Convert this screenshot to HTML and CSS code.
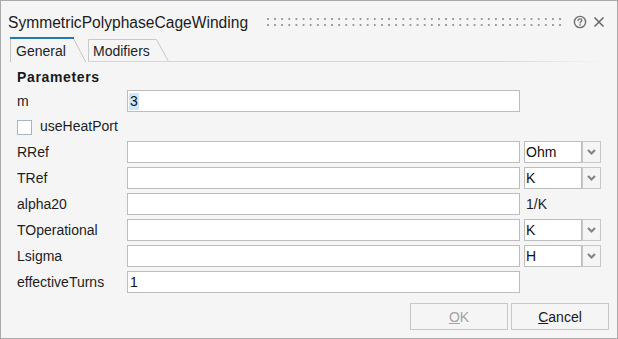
FILE: index.html
```html
<!DOCTYPE html>
<html>
<head>
<meta charset="utf-8">
<link rel="stylesheet" href="styles.css">
</head>
<body>
<div class="window">
  <div class="titlebar">
    <span class="title">SymmetricPolyphaseCageWinding</span>
    <span class="grip"></span>
    <svg class="help" width="14" height="14" viewBox="0 0 14 14">
      <circle cx="7" cy="7" r="5.6" fill="none" stroke="#6e6e6e" stroke-width="1.4"/>
      <path d="M5.1 5.6 C5.1 4.4 6 3.9 7 3.9 C8.1 3.9 8.9 4.5 8.9 5.4 C8.9 6.5 7.1 6.7 7.1 8" fill="none" stroke="#6e6e6e" stroke-width="1.3" stroke-linecap="round"/>
      <circle cx="7.1" cy="9.9" r="0.8" fill="#6e6e6e"/>
    </svg>
    <svg class="close" width="12" height="12" viewBox="0 0 12 12">
      <path d="M1.5 1.5 L10.5 10.5 M10.5 1.5 L1.5 10.5" stroke="#666" stroke-width="1.5" fill="none"/>
    </svg>
  </div>

  <div class="tabs">
    <div class="tab tab-active">
      <svg class="tab-shape" width="78" height="25" viewBox="0 0 78 25">
        <path d="M0.5 25 V1.5 H63.5 L75.8 25" fill="#f5f5f5" stroke="#c4c4c4" stroke-width="1"/>
        <path d="M0 1 H64" stroke="#2479b2" stroke-width="2"/>
      </svg>
      <span class="tab-label">General</span>
    </div>
    <div class="tab tab-inactive">
      <svg class="tab-shape" width="82" height="23" viewBox="0 0 82 23">
        <path d="M0.5 22.5 V0.5 H68.5 L80.5 22.5" fill="#f5f5f5" stroke="#c8c8c8" stroke-width="1"/>
        <path d="M0 22.5 H82" stroke="#d6d6d6" stroke-width="1"/>
      </svg>
      <span class="tab-label">Modifiers</span>
    </div>
    <div class="tab-rest"></div>
  </div>

  <div class="content">
    <div class="heading">Parameters</div>
    <div class="grid">
      <div class="label">m</div>
      <div class="field"><span class="sel">3</span></div>
      <div></div>

      <div class="check-row">
        <span class="checkbox"></span>
        <span class="label">useHeatPort</span>
      </div>

      <div class="label">RRef</div>
      <div class="field"></div>
      <div class="combo"><div class="combo-text">Ohm</div><div class="combo-btn"><svg width="17" height="20" viewBox="0 0 17 20"><path d="M5 8 L8.5 11.5 L12 8" fill="none" stroke="#858585" stroke-width="2.2"/></svg></div></div>

      <div class="label">TRef</div>
      <div class="field"></div>
      <div class="combo"><div class="combo-text">K</div><div class="combo-btn"><svg width="17" height="20" viewBox="0 0 17 20"><path d="M5 8 L8.5 11.5 L12 8" fill="none" stroke="#858585" stroke-width="2.2"/></svg></div></div>

      <div class="label">alpha20</div>
      <div class="field"></div>
      <div class="unit">1/K</div>

      <div class="label">TOperational</div>
      <div class="field"></div>
      <div class="combo"><div class="combo-text">K</div><div class="combo-btn"><svg width="17" height="20" viewBox="0 0 17 20"><path d="M5 8 L8.5 11.5 L12 8" fill="none" stroke="#858585" stroke-width="2.2"/></svg></div></div>

      <div class="label">Lsigma</div>
      <div class="field"></div>
      <div class="combo"><div class="combo-text">H</div><div class="combo-btn"><svg width="17" height="20" viewBox="0 0 17 20"><path d="M5 8 L8.5 11.5 L12 8" fill="none" stroke="#858585" stroke-width="2.2"/></svg></div></div>

      <div class="label">effectiveTurns</div>
      <div class="field"><span class="val">1</span></div>
      <div></div>
    </div>
  </div>

  <div class="footer">
    <button class="btn btn-disabled"><u>O</u>K</button>
    <button class="btn"><u>C</u>ancel</button>
  </div>
</div>
</body>
</html>
```

FILE: styles.css
```css
* { box-sizing: border-box; }

html, body {
  margin: 0;
  padding: 0;
  background: #f5f5f5;
}

body {
  font-family: "Liberation Sans", Arial, sans-serif;
  font-size: 14px;
  color: #1e1e1e;
}

.window {
  width: 618px;
  height: 339px;
  border: 1px solid #a9a9a9;
  background: #f5f5f5;
  display: flex;
  flex-direction: column;
}

/* title bar */
.titlebar {
  height: 36px;
  padding: 13px 12px 0 7px;
  display: flex;
  align-items: flex-start;
}

.title {
  font-size: 15.6px;
  line-height: 18px;
  color: #1c1c1c;
  white-space: nowrap;
}

.grip {
  flex: 1;
  height: 8px;
  margin: 4px 10px 0 19px;
  background-image: radial-gradient(circle at 1px 1px, #9a9a9a 0.85px, rgba(154,154,154,0) 1.35px);
  background-size: 7.13px 6px;
}

.help {
  margin-top: 1px;
  display: block;
}

.close {
  margin-top: 2px;
  margin-left: 6px;
  display: block;
}

/* tabs */
.tabs {
  height: 25px;
  display: flex;
  align-items: flex-end;
  padding-left: 9px;
}

.tab {
  position: relative;
}

.tab-shape {
  position: absolute;
  left: 0;
  top: 0;
  display: block;
}

.tab-label {
  position: relative;
  display: block;
  line-height: 16px;
  white-space: nowrap;
}

.tab-active {
  width: 78px;
  height: 25px;
  padding: 6px 0 0 6px;
}

.tab-inactive {
  width: 82px;
  height: 23px;
  padding: 4px 0 0 5px;
}

.tab-rest {
  flex: 1;
  height: 23px;
  margin-right: 12px;
  background: linear-gradient(to right, #d6d6d6 0%, #d6d6d6 75%, rgba(214,214,214,0) 100%) left bottom / 100% 1px no-repeat;
}

/* content */
.content {
  flex: 1;
  padding: 7px 0 0 16px;
}

.heading {
  font-weight: bold;
  line-height: 16px;
  letter-spacing: 0.65px;
  margin-bottom: 5px;
  color: #1a1a1a;
}

.grid {
  display: grid;
  grid-template-columns: 106px 393px 77px;
  grid-template-rows: 22px 21px repeat(6, 22px);
  column-gap: 4px;
  row-gap: 4px;
}

.label {
  line-height: 16px;
  align-self: center;
  white-space: nowrap;
}

.field {
  height: 22px;
  border: 1px solid #bdbdbd;
  background: #ffffff;
  padding-left: 1px;
  display: flex;
  align-items: center;
  color: #111;
}

.sel {
  background: #cce8ff;
  line-height: 17px;
  padding: 0 1px;
}

.val {
  padding-left: 1px;
  line-height: 16px;
}

.check-row {
  grid-column: 1 / 4;
  display: flex;
  align-items: flex-start;
}

.check-row .label {
  align-self: auto;
  margin-top: 2px;
}

.checkbox {
  width: 15px;
  height: 15px;
  margin-top: 4px;
  margin-right: 8px;
  border: 1px solid #aab3be;
  background: #ffffff;
}

.combo {
  display: flex;
  height: 22px;
}

.combo-text {
  width: 58px;
  height: 22px;
  border: 1px solid #bdbdbd;
  background: #ffffff;
  padding-left: 1px;
  line-height: 20px;
  color: #111;
}

.combo-btn {
  width: 19px;
  height: 22px;
  border: 1px solid #c8c8c8;
  background: #f5f5f5;
}

.combo-btn svg {
  display: block;
}

.unit {
  line-height: 16px;
  align-self: center;
  padding-left: 2px;
}

/* footer */
.footer {
  display: flex;
  justify-content: flex-end;
  gap: 3px;
  padding: 0 8px 8px 0;
}

.btn {
  width: 98px;
  height: 27px;
  border: 1px solid #c8c8c8;
  background: #f5f5f5;
  font-family: "Liberation Sans", Arial, sans-serif;
  font-size: 14px;
  color: #1a1a1a;
  padding: 0;
  margin: 0;
  border-radius: 0;
}

.btn-disabled {
  color: #a3a3a3;
}
```
